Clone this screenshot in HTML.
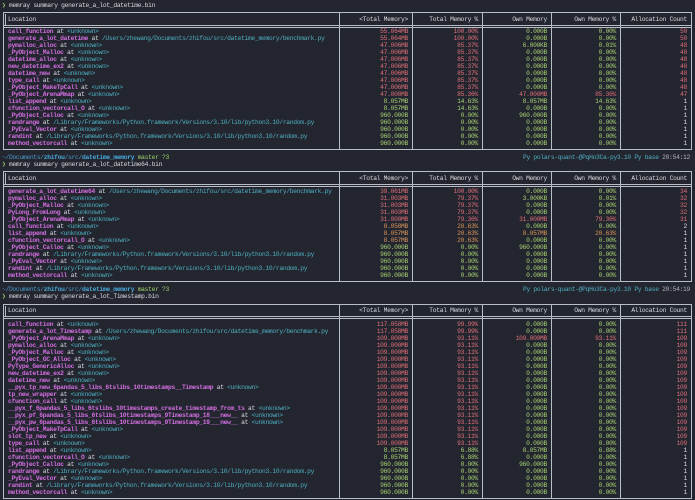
<!DOCTYPE html>
<html><head><meta charset="utf-8"><style>
html,body{margin:0;padding:0;background:#23252f;width:695px;height:500px;overflow:hidden}
#r{position:relative;width:695px;height:500px;font-family:"Liberation Mono",monospace;font-size:6.3px;letter-spacing:-0.3px;color:#d8dae0}
.t{position:absolute;white-space:pre;line-height:7px;height:7px}
.b{position:absolute;background:#b9bdc8}
.m{color:#d36fe0;font-weight:bold}.c{color:#4fb0c0}.R{color:#dd6f78}.G{color:#a8d273}.O{color:#d8955a}.W{color:#d8dae0}
.bl{color:#4aa8d8;font-weight:bold}.dir{color:#4a9cc8}.gr{color:#9cd06a}.tm{color:#b0b3bc}
</style></head><body><div id="r"></div>
<script>
const r=document.getElementById('r');
function T(x,y,html,extra){const d=document.createElement('div');d.className='t';d.style.left=x+'px';d.style.top=(y-3.5)+'px';d.innerHTML=html;if(extra)Object.assign(d.style,extra);r.appendChild(d);return d;}
function B(x,y,w,h){const d=document.createElement('div');d.className='b';Object.assign(d.style,{left:x+'px',top:y+'px',width:w+'px',height:h+'px'});r.appendChild(d);}
const cols=[3,339,412,482,551,620,691];
const U='<span class="c">&lt;unknown&gt;</span>';
const BEN='<span class="c">/Users/zhewang/Documents/zhifou/src/datetime_memory/benchmark.py</span>';
const RND='<span class="c">/Library/Frameworks/Python.framework/Versions/3.10/lib/python3.10/random.py</span>';
function table(top,hdrY,rowsY,rows){
  const bottom=rowsY+(rows.length-1)*7+6;
  B(cols[0],top,cols[6]-cols[0],1);
  B(cols[0],hdrY+6,cols[6]-cols[0],1);
  B(cols[0],hdrY+8,cols[6]-cols[0],1);
  B(cols[0],bottom,cols[6]-cols[0],1);
  cols.forEach(x=>B(x,top,1,bottom-top+1));
  B(cols[0]+2,top+2,1,hdrY+4-top);
  const hd=['&lt;Total Memory&gt;','Total Memory %','Own Memory','Own Memory %','Allocation Count'];
  T(8,hdrY,'Location');
  hd.forEach((h,i)=>T(0,hdrY,h,{left:'auto',right:(695-cols[i+2]+4)+'px'}));
  rows.forEach((rw,j)=>{
    const y=rowsY+j*7;
    T(8,y,'<span class="m">'+rw[0]+'</span> at '+(rw[1]||U));
    for(let i=0;i<5;i++){
      T(0,y,'<span class="'+rw[2][i]+'">'+rw[3][i]+'</span>',{left:'auto',right:(695-cols[i+2]+4)+'px'});
    }
  });
}
function cmd(y,f){T(2,y,'<span class="gr">❯</span> memray summary '+f);}
function prompt(y,time){
  T(2,y,'<span class="dir">~/Documents/</span><span class="bl">zhifou</span><span class="dir">/src/</span><span class="bl">datetime_memory</span> <span class="gr">master ?3</span>');
  T(0,y,'<span class="c">Py polars-quant-@PqHo3Ca-py3.10 Py base</span> <span class="tm">'+time+'</span>',{left:'auto',right:'5px'});
}
function row(n,loc,cl,v){return [n,loc,cl,v];}
cmd(5,'generate_a_lot_datetime.bin');
const A=['47.006MB','85.37%','0.000B','0.00%','48'];
table(12,19,31,[
 row('call_function',0,'RRGGR',['55.064MB','100.00%','0.000B','0.00%','50']),
 row('generate_a_lot_datetime',BEN,'RRGGR',['55.064MB','100.00%','0.000B','0.00%','50']),
 row('pymalloc_alloc',0,'RRGGR',['47.006MB','85.37%','6.000KB','0.01%','48']),
 row('_PyObject_Malloc',0,'RRGGR',A),row('datetime_alloc',0,'RRGGR',A),row('new_datetime_ex2',0,'RRGGR',A),
 row('datetime_new',0,'RRGGR',A),row('type_call',0,'RRGGR',A),row('_PyObject_MakeTpCall',0,'RRGGR',A),
 row('_PyObject_ArenaMmap',0,'RRRRR',['47.000MB','85.36%','47.000MB','85.36%','47']),
 row('list_append',0,'GGGGW',['8.057MB','14.63%','8.057MB','14.63%','1']),
 row('cfunction_vectorcall_O',0,'GGGGW',['8.057MB','14.63%','0.000B','0.00%','1']),
 row('_PyObject_Calloc',0,'GGGGW',['960.000B','0.00%','960.000B','0.00%','1']),
 row('randrange',RND,'GGGGW',['960.000B','0.00%','0.000B','0.00%','1']),
 row('_PyEval_Vector',0,'GGGGW',['960.000B','0.00%','0.000B','0.00%','1']),
 row('randint',RND,'GGGGW',['960.000B','0.00%','0.000B','0.00%','1']),
 row('method_vectorcall',0,'GGGGW',['960.000B','0.00%','0.000B','0.00%','1'])
]);
prompt(157,'20:54:12');
cmd(164,'generate_a_lot_datetime64.bin');
const S=['960.000B','0.00%','0.000B','0.00%','1'];
table(171,178,191,[
 row('generate_a_lot_datetime64',BEN,'RRGGR',['39.061MB','100.00%','0.000B','0.00%','34']),
 row('pymalloc_alloc',0,'RRGGR',['31.003MB','79.37%','3.000KB','0.01%','32']),
 row('_PyObject_Malloc',0,'RRGGR',['31.003MB','79.37%','0.000B','0.00%','32']),
 row('PyLong_FromLong',0,'RRGGR',['31.003MB','79.37%','0.000B','0.00%','32']),
 row('_PyObject_ArenaMmap',0,'RRRRR',['31.000MB','79.36%','31.000MB','79.36%','31']),
 row('call_function',0,'OOGGW',['8.058MB','20.63%','0.000B','0.00%','2']),
 row('list_append',0,'OOOOW',['8.057MB','20.63%','8.057MB','20.63%','1']),
 row('cfunction_vectorcall_O',0,'OOGGW',['8.057MB','20.63%','0.000B','0.00%','1']),
 row('_PyObject_Calloc',0,'GGGGW',['960.000B','0.00%','960.000B','0.00%','1']),
 row('randrange',RND,'GGGGW',S),row('_PyEval_Vector',0,'GGGGW',S),row('randint',RND,'GGGGW',S),row('method_vectorcall',0,'GGGGW',S)
]);
prompt(289,'20:54:19');
cmd(296,'generate_a_lot_Timestamp.bin');
const H=['109.000MB','93.11%','0.000B','0.00%','109'];
const hn=['pymalloc_alloc','_PyObject_Malloc','_PyObject_GC_Alloc','PyType_GenericAlloc','new_datetime_ex2','datetime_new','__pyx_tp_new_6pandas_5_libs_6tslibs_10timestamps__Timestamp','tp_new_wrapper','cfunction_call','__pyx_f_6pandas_5_libs_6tslibs_10timestamps_create_timestamp_from_ts','__pyx_pf_6pandas_5_libs_6tslibs_10timestamps_9Timestamp_18___new__','__pyx_pw_6pandas_5_libs_6tslibs_10timestamps_9Timestamp_19___new__','_PyObject_MakeTpCall','slot_tp_new','type_call'];
table(304,310,324,[
 row('call_function',0,'RRGGR',['117.058MB','99.99%','0.000B','0.00%','111']),
 row('generate_a_lot_Timestamp',BEN,'RRGGR',['117.058MB','99.99%','0.000B','0.00%','111']),
 row('_PyObject_ArenaMmap',0,'RRRRR',['109.000MB','93.11%','109.000MB','93.11%','109']),
 ...hn.map(n=>row(n,0,'RRGGR',H)),
 row('list_append',0,'GGGGW',['8.057MB','6.88%','8.057MB','6.88%','1']),
 row('cfunction_vectorcall_O',0,'GGGGW',['8.057MB','6.88%','0.000B','0.00%','1']),
 row('_PyObject_Calloc',0,'GGGGW',['960.000B','0.00%','960.000B','0.00%','1']),
 row('randrange',RND,'GGGGW',S),row('_PyEval_Vector',0,'GGGGW',S),row('randint',RND,'GGGGW',S),row('method_vectorcall',0,'GGGGW',S)
]);
</script></body></html>
